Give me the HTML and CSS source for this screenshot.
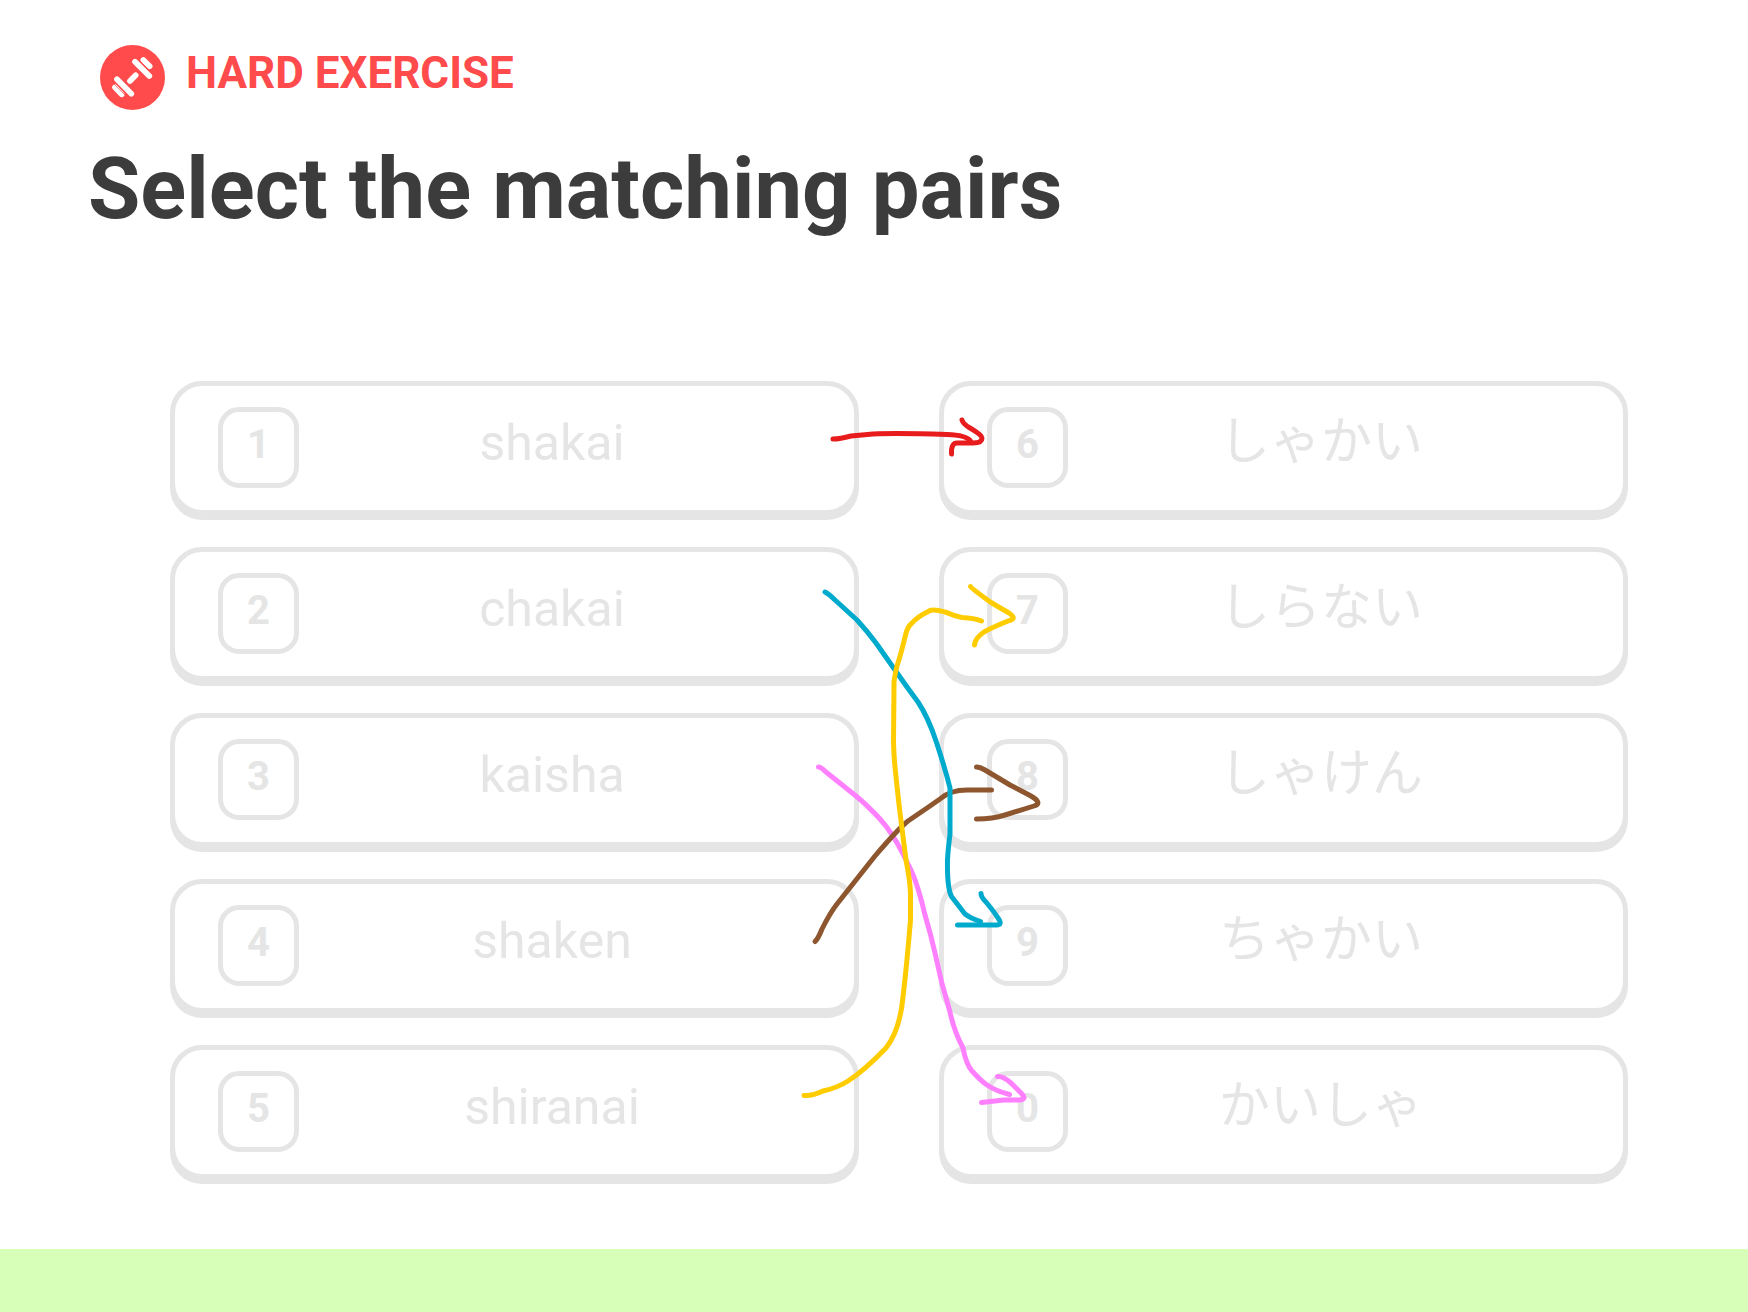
FILE: index.html
```html
<!DOCTYPE html>
<html lang="en">
<head>
<meta charset="utf-8">
<meta name="viewport" content="width=device-width, initial-scale=1">
<title>Select the matching pairs</title>
<link rel="stylesheet" href="styles.css">
</head>
<body>
<main class="exercise">
  <header class="heading">
    <div class="badge">
      <svg class="badge-icon" viewBox="0 0 195 195" aria-hidden="true">
        <circle cx="97.5" cy="97.5" r="97.5" fill="#ff4b4b"/>
        <path d="M105 50L148 93M130 45L149 64M90 108L107 91M51 103L94 146M45 127L65 148" fill="none" stroke="#fff" stroke-width="17" stroke-linecap="round"/>
        <path d="M113 41L160 88M39 114L86 161" fill="none" stroke="#ff4b4b" stroke-width="2"/>
      </svg>
      <span class="badge-label">HARD EXERCISE</span>
    </div>
    <h1 class="title">Select the matching pairs</h1>
  </header>

  <section class="board">
    <div class="column">
      <button class="card" type="button"><span class="key">1</span><span class="word">shakai</span></button>
      <button class="card" type="button"><span class="key">2</span><span class="word">chakai</span></button>
      <button class="card" type="button"><span class="key">3</span><span class="word">kaisha</span></button>
      <button class="card" type="button"><span class="key">4</span><span class="word">shaken</span></button>
      <button class="card" type="button"><span class="key">5</span><span class="word">shiranai</span></button>
    </div>
    <div class="column">
      <button class="card" type="button"><span class="key">6</span><span class="word kana" lang="ja">しゃかい</span></button>
      <button class="card" type="button"><span class="key">7</span><span class="word kana" lang="ja">しらない</span></button>
      <button class="card" type="button"><span class="key">8</span><span class="word kana" lang="ja">しゃけん</span></button>
      <button class="card" type="button"><span class="key">9</span><span class="word kana" lang="ja">ちゃかい</span></button>
      <button class="card" type="button"><span class="key">0</span><span class="word kana" lang="ja">かいしゃ</span></button>
    </div>
    <svg class="arrows" viewBox="170 381 1458 798" aria-hidden="true">
      <g class="arrow arrow-red">
        <path d="M833 439Q840 439 851 436Q862 435 873 434Q897 433 947 434.500Q966 435 970.500 441"/>
        <path d="M962 420Q963 424 970 428Q982 435 982 438Q982 443 973 443L957 443Q951 443 951.500 454"/>
      </g>
      <g class="arrow arrow-pink">
        <path d="M818.500 767Q821 767 826 772L856 796Q867 805 880 819Q892 832 903 854L911 870Q918 885 925 915Q931 935 935 953Q941 983 950 1012Q954 1031 963 1048Q966 1064 972 1071Q981 1081 987 1085Q996 1091 1009.500 1094.500"/>
        <path d="M997.500 1076.500Q1003 1076 1011 1083L1022 1094Q1027 1099 1020 1100L1004 1100L981.500 1102.500"/>
      </g>
      <g class="arrow arrow-brown">
        <path d="M815 941.500Q818 939 822 929Q830 913 837 904L856 880L875 856Q898 829 908 821L930 806L940 799Q950 790 967 790L991.500 790"/>
        <path d="M976.500 767Q980 767 985 770L1010 785L1031 796Q1043 803 1034 806L1005 815Q993 819 976.500 819"/>
      </g>
      <g class="arrow arrow-blue">
        <path d="M825 592Q829 594 835 600L857 620Q867 631 876 643L895 670L907 687L918 702Q928 717 936 741Q945 768 950 788L950 834Q948 850 947.500 860Q947 888 951.500 896.500L965 914Q970 918 980.500 921.500"/>
        <path d="M981 893.500Q981 897 986 902Q995 913 998 918Q1003 925 996.500 925L957.500 925"/>
      </g>
      <g class="arrow arrow-yellow">
        <path d="M804 1095.500Q813 1096 823 1091Q837 1088 848 1081Q865 1070 886 1048Q900 1030 903 997Q907 963 910.500 920L910.500 893Q910 880 906 860L900 813Q897 787 895 767Q894 757 893.500 743L894 684Q894 678 897 666Q901 654 905 637Q907 627 912 623Q917 617 930 610.500Q935 609 948 613Q954 616 962 617.500Q974 618 981.500 621"/>
        <path d="M970.500 586.500Q971 588 991 602.500L1009 613Q1018 619 1008 621Q993 627 984 632Q975 638 974.500 645"/>
      </g>
    </svg>
  </section>
</main>
<footer class="result-bar"></footer>
</body>
</html>
```

FILE: styles.css
```css
* { box-sizing: border-box; }

body {
  margin: 0;
  min-height: 100vh;
  display: flex;
  flex-direction: column;
  background: #fff;
  font-family: Roboto, "Noto Sans CJK JP", sans-serif;
  color: #3c3c3c;
}

.exercise { flex: 1 0 auto; padding: 45px 0 64px; }

.heading { padding: 0 88px; }

.badge {
  display: flex;
  align-items: flex-start;
  gap: 21px;
  padding-left: 12px;
}

.badge-icon { width: 65px; height: 65px; }

.badge-label {
  font-size: 44px;
  line-height: 56px;
  font-weight: 700;
  color: #ff4b4b;
}

.title {
  margin: 31px 0 0;
  font-size: 85px;
  line-height: 96px;
  font-weight: 700;
}

.board {
  position: relative;
  display: grid;
  grid-template-columns: 1fr 1fr;
  gap: 80px;
  margin: 144px 120px 0 170px;
}

.column { display: flex; flex-direction: column; gap: 32px; }

.card {
  display: flex;
  align-items: center;
  height: 134px;
  padding: 0 49px 2px 43px;
  border: 5px solid #e5e5e5;
  border-radius: 32px;
  background: #fff;
  box-shadow: 0 5px 0 #e5e5e5;
  font-family: inherit;
  color: #e5e5e5;
  cursor: pointer;
}

.key {
  flex: none;
  width: 81px;
  height: 81px;
  padding-bottom: 6px;
  display: flex;
  align-items: center;
  justify-content: center;
  border: 5px solid #e5e5e5;
  border-radius: 21px;
  font-size: 40px;
  font-weight: 700;
}

.word {
  flex: 1;
  padding-bottom: 8px;
  font-size: 50px;
  line-height: 64px;
  text-align: center;
}

.kana {
  padding-bottom: 20px;
  font-family: "Noto Sans CJK JP", sans-serif;
  font-size: 51px;
}

.arrows {
  position: absolute;
  inset: 0;
  width: 100%;
  height: 100%;
  overflow: visible;
  pointer-events: none;
}

.arrow {
  fill: none;
  stroke-width: 5px;
  stroke-linecap: round;
  stroke-linejoin: round;
}

.arrow-red { stroke: #e81c1c; }
.arrow-pink { stroke: #ff80ff; }
.arrow-brown { stroke: #8e562e; }
.arrow-blue { stroke: #00aacc; }
.arrow-yellow { stroke: #ffcc00; }

.result-bar { flex: none; height: 63px; background: #d7ffb8; }
```
